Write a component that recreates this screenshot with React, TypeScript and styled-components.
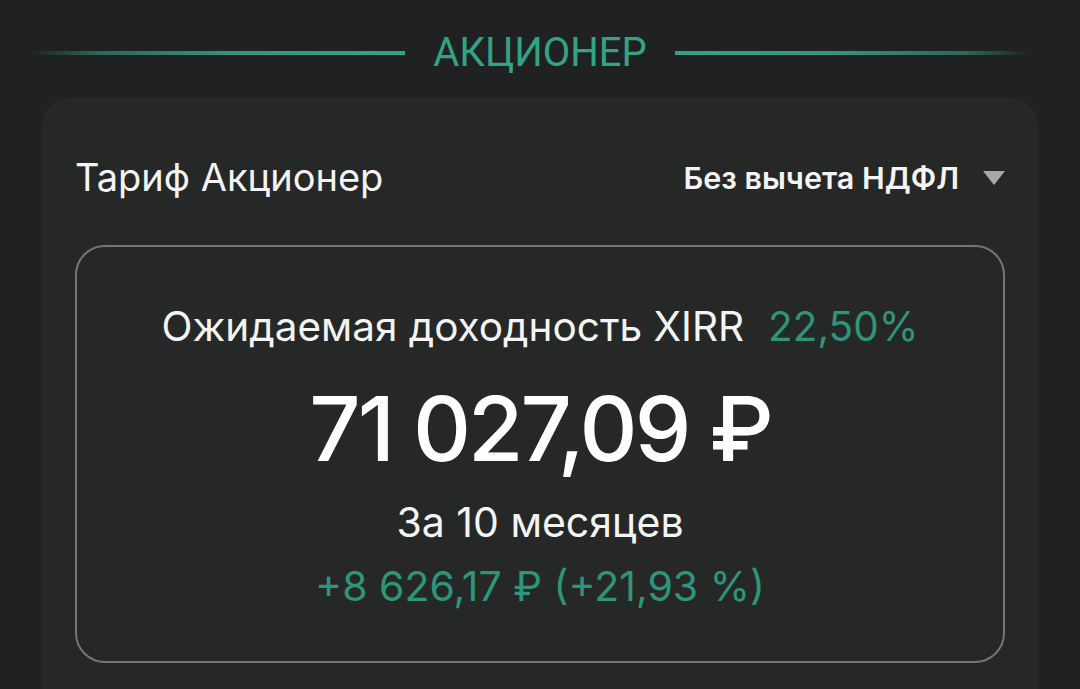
import { createGlobalStyle, styled } from 'styled-components';

const GlobalStyle = createGlobalStyle`
  html, body {
    margin: 0;
    padding: 0;
    background: #1f2123;
    overflow: hidden;
  }
  * {
    box-sizing: border-box;
  }
`;

const Page = styled.div`
  width: 1080px;
  height: 689px;
  background: #1f2123;
  font-family: Inter, Roboto, "Noto Sans", sans-serif;
  color: #ffffff;
  overflow: hidden;
`;

const Header = styled.header`
  height: 90px;
  margin-top: 8px;
  padding: 0 50px 0 30px;
  display: flex;
  align-items: center;
  gap: 28px;
`;

const Line = styled.div<{ $dir: 'left' | 'right'; $grow: number }>`
  flex: ${(p) => p.$grow} 1 0;
  height: 4px;
  background: linear-gradient(
    ${(p) => (p.$dir === 'left' ? 'to right' : 'to left')},
    rgba(52, 163, 132, 0) 0%,
    rgba(52, 163, 132, 0.55) 18%,
    rgba(52, 163, 132, 0.9) 55%,
    #34a384 100%
  );
`;

const Title = styled.h1`
  margin: 0;
  font-family: Roboto, sans-serif;
  font-size: 40px;
  font-weight: 400;
  line-height: 1;
  color: #34a384;
`;

const Card = styled.section`
  margin: 0 42px;
  height: 640px;
  background: #262828;
  border-radius: 28px 28px 0 0;
  padding: 50px 33px 0 33px;
`;

const TopRow = styled.div`
  height: 58px;
  display: flex;
  align-items: center;
  justify-content: space-between;
`;

const TariffName = styled.span`
  font-size: 38px;
  font-weight: 400;
  color: #f4f4f4;
`;

const Select = styled.div`
  display: flex;
  align-items: center;
  gap: 24px;
  font-size: 30.5px;
  font-weight: 600;
  color: #f4f4f4;
`;

const Caret = styled.span`
  width: 0;
  height: 0;
  border-left: 11px solid transparent;
  border-right: 11px solid transparent;
  border-top: 14px solid #a7aaad;
  margin-top: 2px;
`;

const ResultBox = styled.div`
  margin-top: 39px;
  height: 418px;
  border: 2px solid #737677;
  border-radius: 30px;
  display: flex;
  flex-direction: column;
  align-items: center;
  padding-top: 54px;
`;

const Yield = styled.div`
  height: 50px;
  display: flex;
  align-items: center;
  gap: 24px;
  font-size: 40.5px;
  color: #f4f4f4;
`;

const Green = styled.span`
  color: #2f9579;
`;

const Amount = styled.div`
  margin-top: 23px;
  height: 110px;
  line-height: 110px;
  font-size: 90px;
  font-weight: 500;
  letter-spacing: -3px;
  color: #ffffff;
`;

const Period = styled.div`
  margin-top: 13px;
  height: 50px;
  line-height: 50px;
  font-size: 41px;
  color: #f4f4f4;
`;

const Profit = styled.div`
  margin-top: 14px;
  height: 50px;
  line-height: 50px;
  font-size: 41px;
`;

export default function App() {
  return (
    <Page>
      <GlobalStyle />
      <Header>
        <Line $dir="left" $grow={377} />
        <Title>АКЦИОНЕР</Title>
        <Line $dir="right" $grow={357} />
      </Header>
      <Card>
        <TopRow>
          <TariffName>Тариф Акционер</TariffName>
          <Select>
            Без вычета НДФЛ
            <Caret />
          </Select>
        </TopRow>
        <ResultBox>
          <Yield>
            Ожидаемая доходность XIRR
            <Green>22,50%</Green>
          </Yield>
          <Amount>71 027,09 ₽</Amount>
          <Period>За 10 месяцев</Period>
          <Profit>
            <Green>+8 626,17 ₽ (+21,93 %)</Green>
          </Profit>
        </ResultBox>
      </Card>
    </Page>
  );
}
